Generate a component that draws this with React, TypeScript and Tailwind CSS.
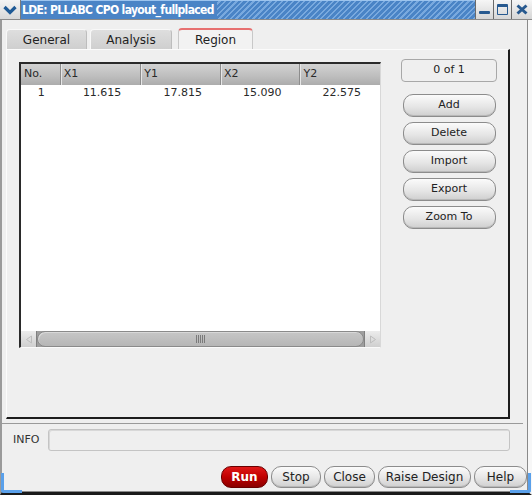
import React from "react";

const F = { fontFamily: '"DejaVu Sans", sans-serif' };

function PillButton({ label, className = "" }: { label: string; className?: string }) {
  return (
    <div
      className={
        "flex items-center justify-center rounded-[10px] border border-[#8c8c8c] bg-[linear-gradient(#fbfbfb,#e6e6e6_55%,#cfcfcf)] text-[11px] text-[#222] shadow-[inset_0_-1px_0_#b8b8b8] " +
        className
      }
    >
      {label}
    </div>
  );
}

export default function App() {
  const cols = [
    { name: "No.", w: 40, v: "1", pr: 16 },
    { name: "X1", w: 81, v: "11.615", pr: 20 },
    { name: "Y1", w: 80, v: "17.815", pr: 19 },
    { name: "X2", w: 80, v: "15.090", pr: 19 },
    { name: "Y2", w: 80, v: "22.575", pr: 19 },
  ];
  return (
    <div className="relative flex h-[495px] w-[532px] flex-col overflow-hidden bg-[#efefef]" style={F}>
      {/* Title bar */}
      <div className="flex h-[20px] shrink-0 border-b border-[#8a8a8a]">
        <div className="flex w-[21px] items-center justify-center border-r border-[#7a7a7a] bg-[linear-gradient(#f4f4f4,#d8d8d8)]">
          <svg width="14" height="10" viewBox="0 0 14 10">
            <path d="M1.5 2 L7 7.5 L12.5 2" stroke="#1f5a96" strokeWidth="3.2" fill="none" />
          </svg>
        </div>
        <div className="flex flex-1 items-center border-t border-[#9cc4ee] bg-[repeating-linear-gradient(135deg,#79a9de_0px,#79a9de_1.5px,#4a84c6_1.5px,#4a84c6_4px)]">
          <span
            className="flex h-full items-center bg-[#4a84c6] pl-[1px] pr-[3px] text-[12px] font-bold tracking-[-0.65px] text-white"
            style={{ fontFamily: '"DejaVu Sans Condensed", "DejaVu Sans", sans-serif' }}
          >
            LDE: PLLABC CPO layout_fullplaced
          </span>
        </div>
        <div className="flex">
          <div className="flex w-[18px] items-end justify-center border-l border-[#6a6a6a] bg-[linear-gradient(#f6f6f6,#d6d6d6)] pb-[5px]">
            <div className="h-[3px] w-[11px] rounded-[1px] bg-[#27598f]" />
          </div>
          <div className="flex w-[18px] items-center justify-center border-l border-[#6a6a6a] bg-[linear-gradient(#f6f6f6,#d6d6d6)]">
            <div className="h-[11px] w-[11px] rounded-[1px] border-[1.5px] border-t-[3px] border-[#27598f]" />
          </div>
          <div className="flex w-[21px] items-center justify-center border-l border-[#6a6a6a] bg-[linear-gradient(#f6f6f6,#d6d6d6)]">
            <svg width="12" height="11" viewBox="0 0 12 11">
              <path d="M1.5 1.5 L10.5 9.5 M10.5 1.5 L1.5 9.5" stroke="#27598f" strokeWidth="3" />
            </svg>
          </div>
        </div>
      </div>

      {/* Body */}
      <div className="flex flex-1 flex-col border-l-2 border-r-[4px] border-b-[3px] border-l-[#9a9a9a] border-r-[#f7f7f7] border-b-[#1a1a1a]">
        <div className="flex flex-1 flex-col border-r border-b border-[#8a8a8a] pl-[4px]">
          {/* Tabs */}
          <div className="mt-[8px] flex h-[21px] items-end">
            <div className="flex h-[20px] w-[81px] items-center justify-center rounded-t-[4px] border border-b-0 border-[#bdbdbd] border-t-[#f8f8f8] border-l-[#f8f8f8] bg-[linear-gradient(#dedede,#cfcfcf)] pt-[1px] text-[12px] text-[#222]">
              General
            </div>
            <div className="ml-[3px] flex h-[20px] w-[82px] items-center justify-center rounded-t-[4px] border border-b-0 border-[#bdbdbd] border-t-[#f8f8f8] border-l-[#f8f8f8] bg-[linear-gradient(#dedede,#cfcfcf)] pt-[1px] text-[12px] text-[#222]">
              Analysis
            </div>
            <div className="ml-[6px] flex h-[21px] w-[75px] items-center justify-center rounded-t-[4px] border border-b-0 border-[#c8c8c8] border-t-[2px] border-t-[#e77070] bg-[#f2f2f2] text-[12px] text-[#222]">
              Region
            </div>
          </div>

          {/* Panel */}
          <div className="flex h-[370px] w-[504px] border-t border-l border-t-[#fbfbfb] border-l-[#fbfbfb] border-r-2 border-b-2 border-r-[#1c1c1c] border-b-[#1c1c1c] pl-[12px] pt-[12px]">
            {/* Table */}
            <div className="flex h-[286px] w-[362px] flex-col border-t-2 border-l-2 border-r border-b border-t-[#2a2a2a] border-l-[#2a2a2a] border-r-[#d8d8d8] border-b-[#fafafa] bg-white">
              <div className="flex h-[21px] bg-[linear-gradient(#d2d2d2,#bdbdbd_60%,#acacac)]">
                {cols.map((c, i) => (
                  <div
                    key={c.name}
                    style={{ width: c.w }}
                    className={
                      "flex items-center pl-[3px] text-[11px] text-[#2a2a2a] " +
                      (i < cols.length - 1 ? "border-r border-[#8c8c8c] shadow-[1px_0_0_#e6e6e6]" : "")
                    }
                  >
                    {c.name}
                  </div>
                ))}
              </div>
              <div className="flex h-[16px]">
                {cols.map((c) => (
                  <div
                    key={c.name}
                    style={{ width: c.w, paddingRight: c.pr }}
                    className="flex items-center justify-end text-[11px] text-[#2a2a2a]"
                  >
                    {c.v}
                  </div>
                ))}
              </div>
              <div className="flex-1" />
              {/* Scrollbar */}
              <div className="flex h-[16px] bg-[#9e9e9e]">
                <div className="flex w-[16px] items-center justify-center border-r border-[#808080] bg-[linear-gradient(#ececec,#cfcfcf)]">
                  <svg width="8" height="9" viewBox="0 0 8 9">
                    <path d="M6.5 1 L1.5 4.5 L6.5 8 Z" fill="none" stroke="#bdbdbd" />
                  </svg>
                </div>
                <div className="flex flex-1 items-center justify-center rounded-[8px] border border-[#8a8a8a] bg-[linear-gradient(#c6c6c6,#b6b6b6)] shadow-[inset_1px_1px_0_#d8d8d8]">
                  <svg width="9" height="8" viewBox="0 0 9 8">
                    <path d="M0.5 0 V8 M2.5 0 V8 M4.5 0 V8 M6.5 0 V8 M8.5 0 V8" stroke="#7a7a7a" />
                  </svg>
                </div>
                <div className="flex w-[16px] items-center justify-center border-l border-[#808080] bg-[linear-gradient(#ececec,#cfcfcf)]">
                  <svg width="8" height="9" viewBox="0 0 8 9">
                    <path d="M1.5 1 L6.5 4.5 L1.5 8 Z" fill="none" stroke="#bdbdbd" />
                  </svg>
                </div>
              </div>
            </div>

            {/* Right column */}
            <div className="ml-[20px] flex w-[96px] flex-col items-center">
              <div className="-mt-[3px] flex h-[23px] w-[96px] items-center justify-center rounded-[4px] border border-[#a8a8a8] text-[11px] text-[#222]">
                0 of 1
              </div>
              <div className="mt-[12px] flex flex-col gap-[5px]">
                {["Add", "Delete", "Import", "Export", "Zoom To"].map((b) => (
                  <PillButton key={b} label={b} className="h-[23px] w-[93px]" />
                ))}
              </div>
            </div>
          </div>

          {/* Separator */}
          <div className="mt-[4px] h-[1px] w-full bg-[#9a9a9a] -ml-[4px]" />

          {/* INFO */}
          <div className="mt-[5px] flex items-center">
            <div className="w-[42px] pl-[7px] text-[11px] text-[#333]">INFO</div>
            <div className="h-[22px] w-[462px] rounded-[3px] border border-[#c4c4c4] bg-[#efefef] shadow-[inset_1px_1px_0_#d8d8d8]" />
          </div>

          {/* Bottom buttons */}
          <div className="mt-[15px] flex gap-[3px] pl-[215px]">
            <div className="flex h-[22px] w-[47px] items-center justify-center rounded-[10px] border border-[#6a0000] bg-[linear-gradient(#e01818,#c00000_50%,#8a0000)] text-[12px] font-bold text-white">
              Run
            </div>
            <PillButton label="Stop" className="h-[22px] w-[50px] text-[12px]" />
            <PillButton label="Close" className="h-[22px] w-[51px] text-[12px]" />
            <PillButton label="Raise Design" className="h-[22px] w-[93px] text-[12px]" />
            <PillButton label="Help" className="h-[22px] w-[53px] text-[12px]" />
          </div>
        </div>
      </div>

      {/* Resize corner handles */}
      <div className="absolute bottom-[2px] left-[1px] h-[20px] w-[21px] rounded-bl-[3px] border-b-[3px] border-l-[3px] border-[#5aa0ea]" />
      <div className="absolute bottom-[2px] right-[1px] h-[20px] w-[21px] rounded-br-[3px] border-b-[3px] border-r-[3px] border-[#5aa0ea]" />
    </div>
  );
}
